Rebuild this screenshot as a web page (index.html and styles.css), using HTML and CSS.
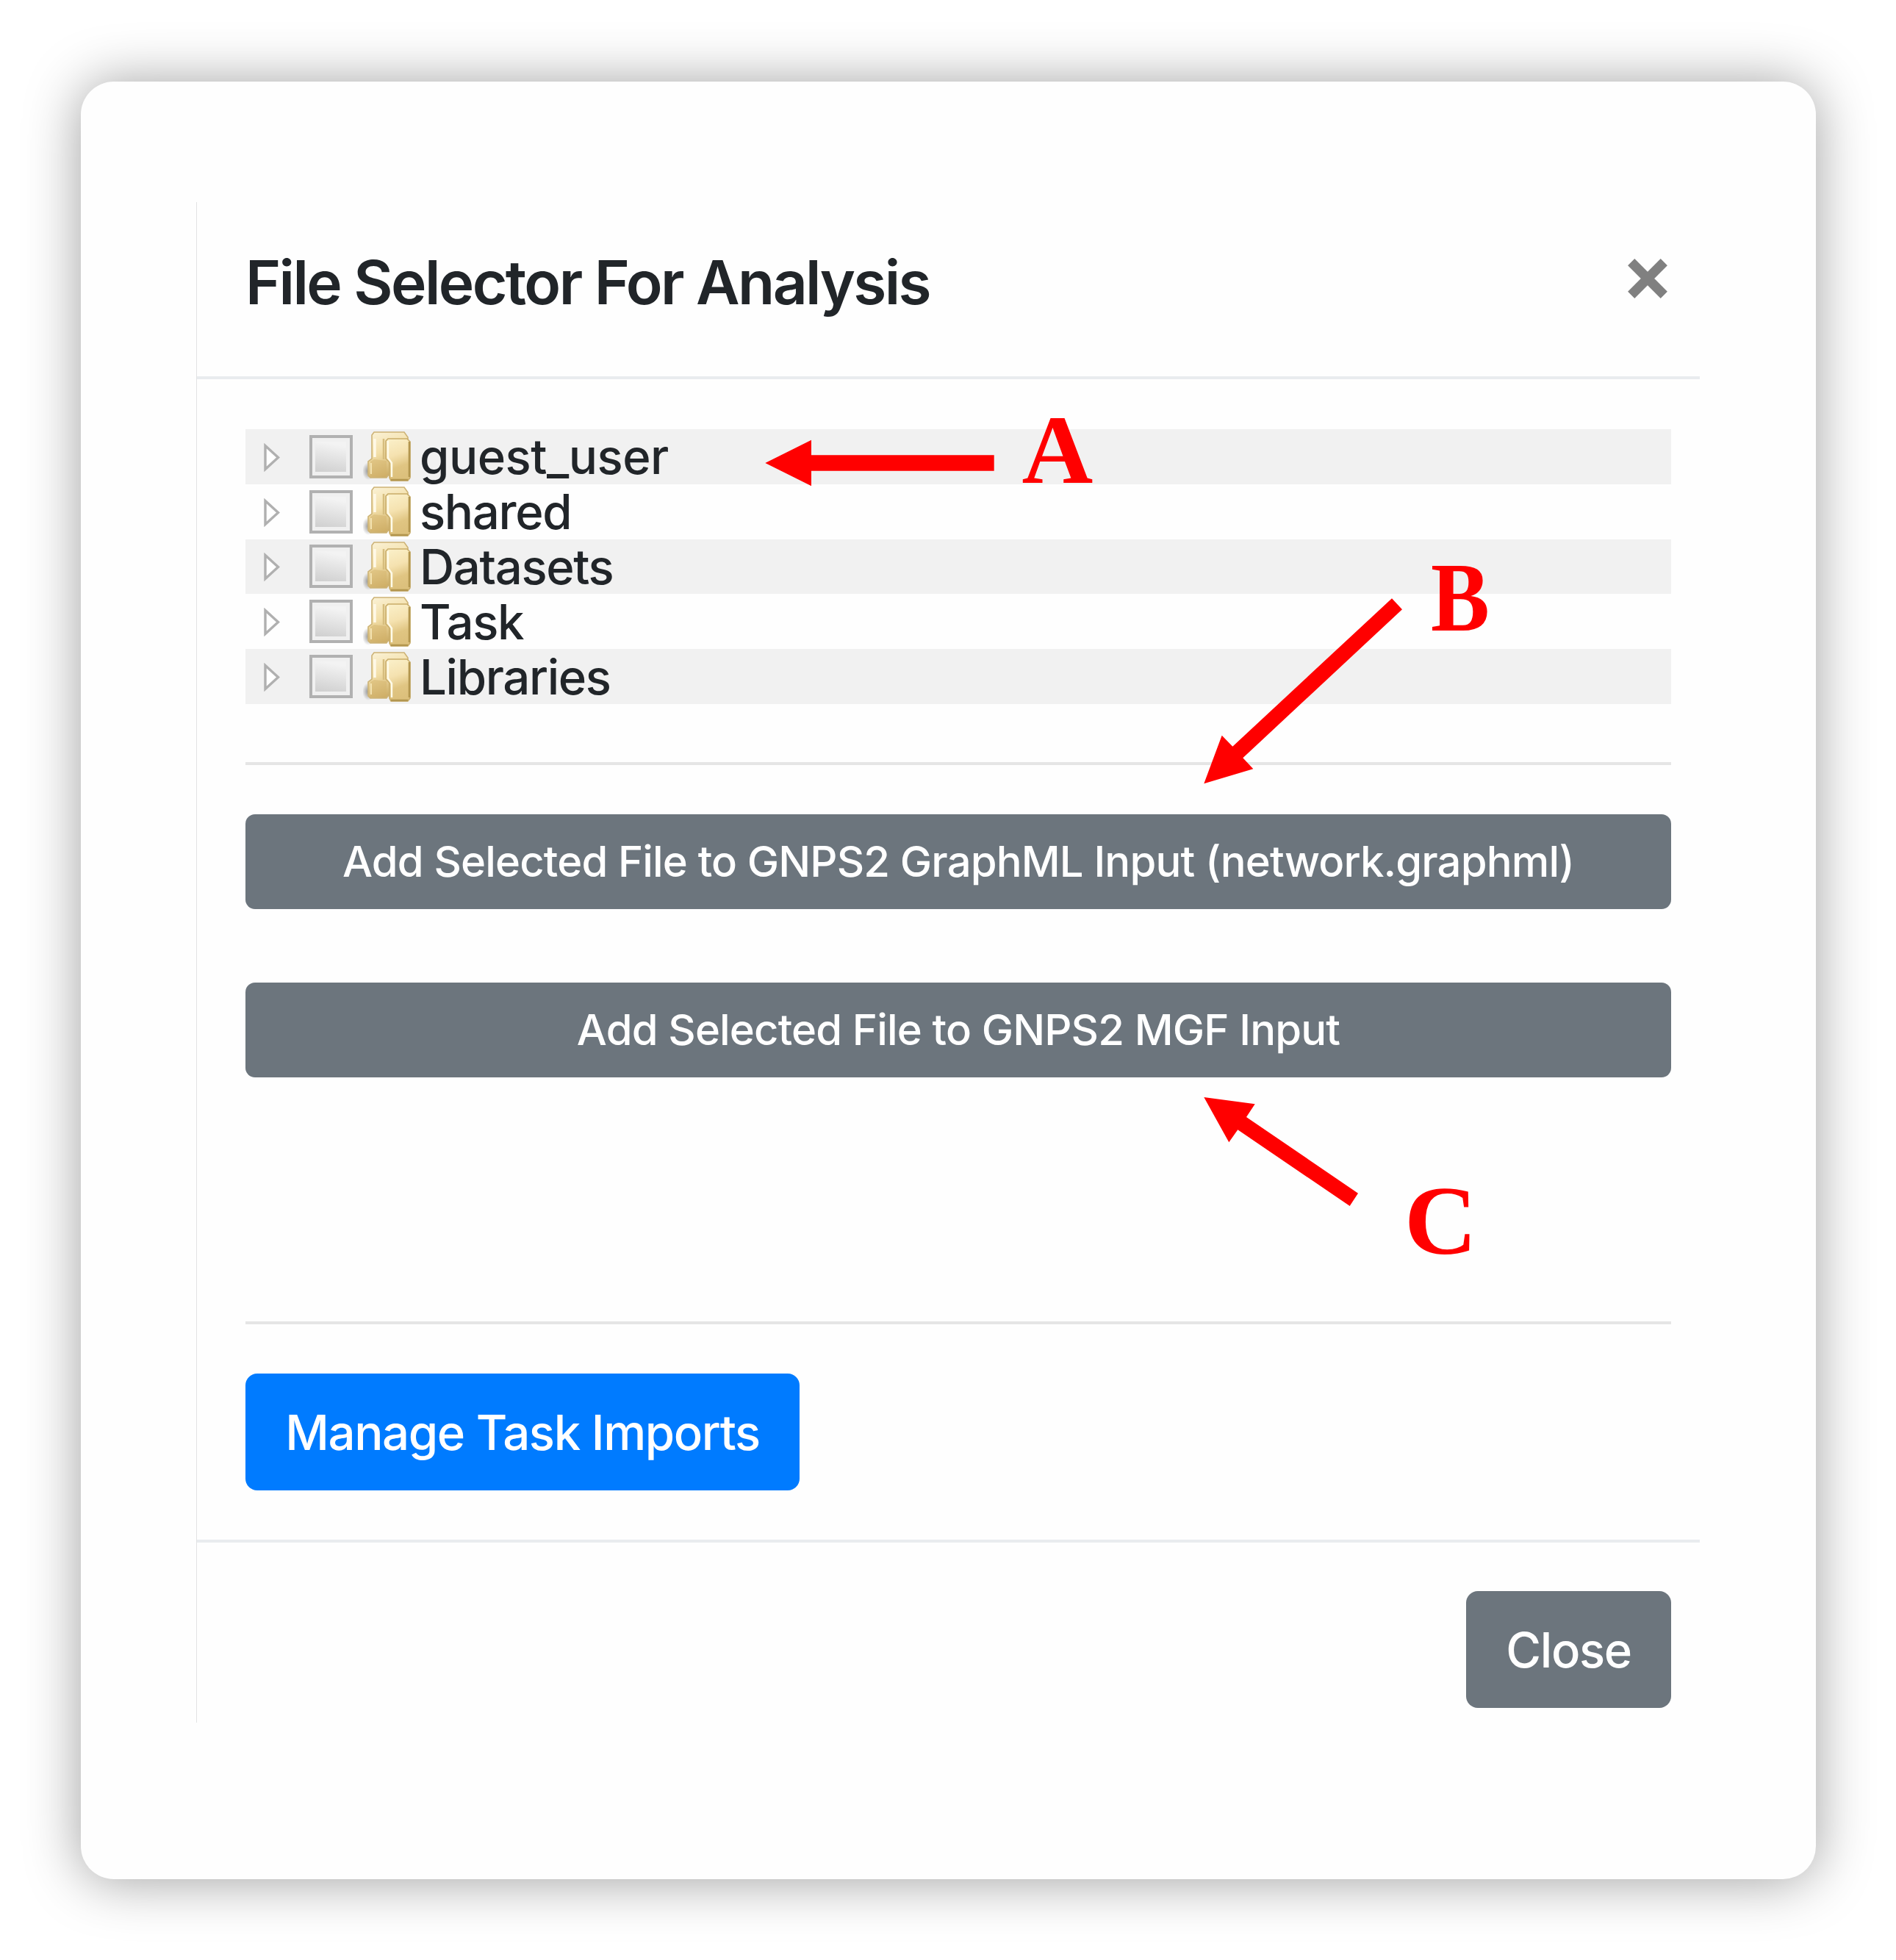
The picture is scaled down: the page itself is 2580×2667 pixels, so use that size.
FILE: index.html
```
<!DOCTYPE html>
<html lang="en">
<head>
<meta charset="utf-8">
<title>File Selector For Analysis</title>
<link rel="stylesheet" href="styles.css">
</head>
<body>
<svg class="defs" width="0" height="0" aria-hidden="true">
  <defs>
    <linearGradient id="back" x1="0" y1="0" x2="0.3" y2="1"><stop offset="0" stop-color="#fbf3d9"/><stop offset="0.5" stop-color="#f3dfa8"/><stop offset="1" stop-color="#cdae68"/></linearGradient>
    <linearGradient id="front" x1="0" y1="0" x2="0.2" y2="1"><stop offset="0" stop-color="#fbf1cb"/><stop offset="0.45" stop-color="#f5e2b0"/><stop offset="0.75" stop-color="#e0c582"/><stop offset="1" stop-color="#dcc07c"/></linearGradient>
    <linearGradient id="box" x1="0.2" y1="0" x2="0" y2="1"><stop offset="0" stop-color="#f3f3f3"/><stop offset="1" stop-color="#cfcfcf"/></linearGradient>
    <radialGradient id="shade"><stop offset="0" stop-color="#555" stop-opacity="0.6"/><stop offset="1" stop-color="#555" stop-opacity="0"/></radialGradient>
  </defs>
  <symbol id="arrow" viewBox="0 0 22 39"><path d="M2 3.5V35.5L19.5 19.5Z" fill="#fff" stroke="#b0b0b0" stroke-width="3.4"/></symbol>
  <symbol id="check" viewBox="0 0 59 59"><rect x="2" y="2" width="55" height="55" fill="#f0f0f0" stroke="#b1b1b1" stroke-width="4"/><rect x="8" y="9" width="42" height="41" fill="url(#box)"/></symbol>
  <symbol id="folder" viewBox="0 0 66 68">
    <ellipse cx="7" cy="54" rx="8" ry="12" fill="url(#shade)"/>
    <path d="M15 1H56L61 8V60H34L32 63H10L7 60V41L12 37V5Z" fill="url(#back)" stroke="#cdb376" stroke-width="1.6"/>
    <path d="M10 41L15 38L32 40V61H10Z" fill="#d3b269" opacity="0.45"/>
    <path d="M28 10V38" stroke="#d6bd7e" stroke-width="2.5"/>
    <path d="M16 10V35" stroke="#fff9e8" stroke-width="3.4"/>
    <path d="M11 43V58" stroke="#f3e2b0" stroke-width="2"/>
    <path d="M34 10H60L64 14V63L61 67H38L36 63V42L31 37V13Z" fill="url(#front)" stroke="#c9ac68" stroke-width="1.6"/>
    <path d="M34 13V36L39 43V62" fill="none" stroke="#fffbe9" stroke-width="2.4"/>
    <path d="M63 14V62" stroke="#b3964f" stroke-width="2.6"/>
    <path d="M38 66H61" stroke="#b3964f" stroke-width="2.6"/>
  </symbol>
</svg>
<main class="panel">
  <section class="dialog">
    <header class="dialog-header">
      <h1 class="title">File Selector For Analysis</h1>
      <svg class="dismiss" viewBox="0 0 54 54" role="img" aria-label="Dismiss"><path d="M4.7 4.7L49.3 49.3M49.3 4.7L4.7 49.3" stroke="#808080" stroke-width="13"/></svg>
    </header>
    <div class="dialog-body">
      <ul class="tree">
        <li class="node"><svg class="arrow"><use href="#arrow"/></svg><svg class="check"><use href="#check"/></svg><svg class="folder"><use href="#folder"/></svg><span class="name name-user">guest_user</span></li>
        <li class="node"><svg class="arrow"><use href="#arrow"/></svg><svg class="check"><use href="#check"/></svg><svg class="folder"><use href="#folder"/></svg><span class="name">shared</span></li>
        <li class="node"><svg class="arrow"><use href="#arrow"/></svg><svg class="check"><use href="#check"/></svg><svg class="folder"><use href="#folder"/></svg><span class="name">Datasets</span></li>
        <li class="node"><svg class="arrow"><use href="#arrow"/></svg><svg class="check"><use href="#check"/></svg><svg class="folder"><use href="#folder"/></svg><span class="name">Task</span></li>
        <li class="node"><svg class="arrow"><use href="#arrow"/></svg><svg class="check"><use href="#check"/></svg><svg class="folder"><use href="#folder"/></svg><span class="name">Libraries</span></li>
      </ul>
      <hr class="rule rule-tree">
      <div class="actions">
        <button class="btn btn-wide">Add Selected File to GNPS2 GraphML Input (network.graphml)</button>
        <button class="btn btn-wide">Add Selected File to GNPS2 MGF Input</button>
      </div>
      <hr class="rule rule-actions">
      <button class="btn btn-primary">Manage Task Imports</button>
    </div>
    <footer class="dialog-footer">
      <button class="btn btn-close">Close</button>
    </footer>
  </section>
</main>
<svg class="callouts" viewBox="0 0 2580 2667">
  <path d="M1041.3 630L1104 598.7V619.3H1352.7V640.7H1104V661.3Z"/>
  <path d="M1638.3 1066.3L1662.7 1000.7L1677.3 1015.7L1894 814.3L1908 829.3L1691.3 1031.3L1705.3 1046.3Z"/>
  <path d="M1638.3 1493L1707.7 1502.3L1696 1520L1848 1623.7L1836.7 1641L1684.3 1537.3L1672.3 1554.3Z"/>
  <text x="1390.5" y="657">A</text>
  <text x="1947" y="858" textLength="80" lengthAdjust="spacingAndGlyphs">B</text>
  <text x="1911" y="1706" textLength="99" lengthAdjust="spacingAndGlyphs">C</text>
</svg>
</body>
</html>
```
FILE: styles.css
```
* {
  box-sizing: border-box;
}

body {
  margin: 0;
  height: 2667px;
  padding: 111px 109px 110px 110px;
  background: #fff;
  color: #212529;
  font-family: Inter, "Liberation Sans", sans-serif;
  overflow: hidden;
}

.defs {
  position: absolute;
}

.panel {
  height: 2446px;
  padding: 164px 158px 0 157px;
  border-radius: 45px;
  background: #fefefe;
  box-shadow: 0 2px 76px rgba(0, 0, 0, 0.38);
}

.dialog {
  height: 2069px;
  border-left: 1px solid #e2e3e4;
}

.dialog-header {
  display: flex;
  justify-content: space-between;
  align-items: flex-start;
  height: 241px;
  padding: 60px 44px 0 66px;
  border-bottom: 4px solid #e9ecef;
}

.title {
  margin: 0;
  font-size: 82px;
  font-weight: 600;
  letter-spacing: -2.6px;
  line-height: 100px;
  white-space: nowrap;
}

.dismiss {
  width: 54px;
  height: 54px;
  margin-top: 17px;
}

.dialog-body {
  height: 1579px;
  padding: 68px 39px 0 66px;
}

.tree {
  margin: 0;
  padding: 0;
  list-style: none;
}

.node {
  display: flex;
  align-items: center;
  height: 74.8px;
  padding-left: 25px;
}

.node:nth-child(odd) {
  background: #f1f1f1;
}

.arrow {
  width: 22px;
  height: 39px;
  margin-top: 2px;
}

.check {
  width: 59px;
  height: 59px;
  margin-left: 40px;
}

.folder {
  width: 66px;
  height: 68px;
  margin-left: 14px;
}

.name {
  margin-left: 11px;
  padding-top: 2px;
  font-size: 65.3px;
  font-weight: 450;
  letter-spacing: -1.35px;
  line-height: 72px;
}

.name-user {
  letter-spacing: -0.5px;
}

.rule {
  height: 4px;
  border: 0;
  background: #e5e5e5;
}

.rule-tree {
  margin: 79px 0 67px;
}

.actions {
  display: flex;
  flex-direction: column;
  gap: 100px;
}

.rule-actions {
  margin: 332.5px 0 67px;
}

.btn {
  display: flex;
  align-items: center;
  justify-content: center;
  margin: 0;
  padding: 0;
  border: 0;
  border-radius: 16px;
  background: #6c757d;
  color: #fff;
  font-family: inherit;
  font-size: 65.3px;
  font-weight: 450;
  letter-spacing: -1.4px;
  white-space: nowrap;
}

.btn-wide {
  height: 129px;
  border-radius: 13px;
  font-size: 58px;
  letter-spacing: -0.85px;
}

.btn-primary {
  width: 754px;
  height: 159px;
  padding-top: 2px;
  background: #007bff;
}

.dialog-footer {
  display: flex;
  justify-content: flex-end;
  padding: 66px 39px 0;
  border-top: 4px solid #e9ecef;
}

.btn-close {
  width: 279px;
  height: 159px;
  padding-top: 2px;
}

.callouts {
  position: absolute;
  left: 0;
  top: 0;
  width: 2580px;
  height: 2667px;
  fill: #f00;
  font: bold 134px "Liberation Serif", serif;
}
```
